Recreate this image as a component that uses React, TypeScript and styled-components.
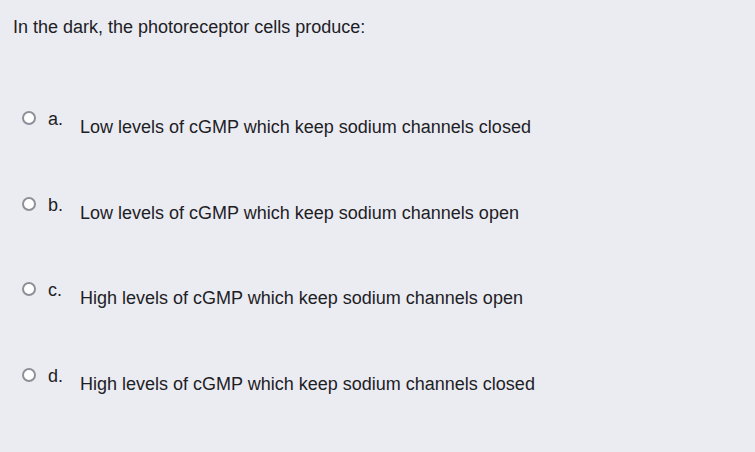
import React from "react";
import styled, { createGlobalStyle } from "styled-components";

const Global = createGlobalStyle`
  html, body { margin: 0; padding: 0; background: #ebecf2; }
  body { font-family: "Liberation Sans", Arial, sans-serif; color: #1d2125; }
`;

const Page = styled.div`
  width: 755px;
  height: 452px;
  background: #ebecf2;
  padding: 16px 0 0 13px;
  box-sizing: border-box;
`;

const Question = styled.div`
  font-size: 18px;
  line-height: 22px;
`;

const Options = styled.div`
  margin-top: 70px;
  padding-left: 9px;
  display: flex;
  flex-direction: column;
`;

const Row = styled.label`
  display: flex;
  align-items: flex-start;
  height: 85.5px;
  font-size: 18px;
  line-height: 22px;
`;

const Radio = styled.span`
  width: 14px;
  height: 14px;
  box-sizing: border-box;
  border-radius: 50%;
  border: 2px solid #8e9099;
  background: #fff;
  margin-top: 3px;
  margin-right: 12px;
  flex: none;
`;

const Letter = styled.span`
  width: 32px;
  flex: none;
`;

const Answer = styled.span`
  margin-top: 8px;
`;

const options = [
  ["a.", "Low levels of cGMP which keep sodium channels closed"],
  ["b.", "Low levels of cGMP which keep sodium channels open"],
  ["c.", "High levels of cGMP which keep sodium channels open"],
  ["d.", "High levels of cGMP which keep sodium channels closed"],
];

export default function App() {
  return (
    <>
      <Global />
      <Page>
        <Question>In the dark, the photoreceptor cells produce:</Question>
        <Options>
          {options.map(([l, t]) => (
            <Row key={l}>
              <Radio />
              <Letter>{l}</Letter>
              <Answer>{t}</Answer>
            </Row>
          ))}
        </Options>
      </Page>
    </>
  );
}
